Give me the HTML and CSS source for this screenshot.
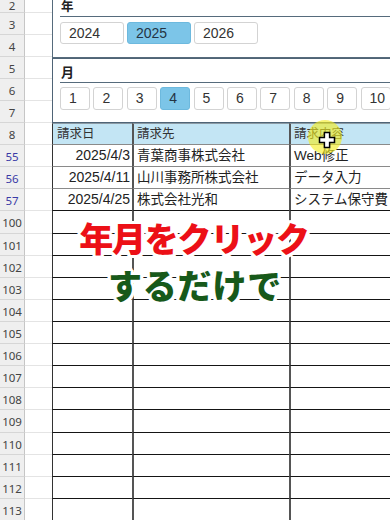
FILE: index.html
```html
<!DOCTYPE html>
<html lang="ja">
<head>
<meta charset="utf-8">
<link rel="stylesheet" href="styles.css">
</head>
<body>
<div class="page">
  <div class="top">
    <div class="heads">
      <div class="row first"><div class="rh">2</div><div class="cb"></div></div>
      <div class="row"><div class="rh">3</div><div class="cb"></div></div>
      <div class="row"><div class="rh">4</div><div class="cb"></div></div>
      <div class="row"><div class="rh">5</div><div class="cb"></div></div>
      <div class="row"><div class="rh">6</div><div class="cb"></div></div>
      <div class="row"><div class="rh">7</div><div class="cb"></div></div>
    </div>
    <div class="slicers">
      <section class="slicer s-year">
        <div class="s-title">年</div>
        <div class="btns">
          <span class="btn yb">2024</span>
          <span class="btn yb on">2025</span>
          <span class="btn yb">2026</span>
        </div>
      </section>
      <section class="slicer s-month">
        <div class="s-title">月</div>
        <div class="btns">
          <span class="btn mb">1</span>
          <span class="btn mb">2</span>
          <span class="btn mb">3</span>
          <span class="btn mb on">4</span>
          <span class="btn mb">5</span>
          <span class="btn mb">6</span>
          <span class="btn mb">7</span>
          <span class="btn mb">8</span>
          <span class="btn mb">9</span>
          <span class="btn mb">10</span>
        </div>
      </section>
    </div>
  </div>

  <div class="table">
    <div class="row hdr"><div class="rh">8</div><div class="cb"></div><div class="c c1">請求日</div><div class="c c2">請求先</div><div class="c c3">請求内容</div></div>
    <div class="row data"><div class="rh f">55</div><div class="cb"></div><div class="c c1 num">2025/4/3</div><div class="c c2">青葉商事株式会社</div><div class="c c3">Web修正</div></div>
    <div class="row data"><div class="rh f">56</div><div class="cb"></div><div class="c c1 num">2025/4/11</div><div class="c c2">山川事務所株式会社</div><div class="c c3">データ入力</div></div>
    <div class="row data last"><div class="rh f">57</div><div class="cb"></div><div class="c c1 num">2025/4/25</div><div class="c c2">株式会社光和</div><div class="c c3">システム保守費</div></div>
    <div class="row empty"><div class="rh">100</div><div class="cb"></div><div class="c c1"></div><div class="c c2"></div><div class="c c3"></div></div>
    <div class="row empty"><div class="rh">101</div><div class="cb"></div><div class="c c1"></div><div class="c c2"></div><div class="c c3"></div></div>
    <div class="row empty"><div class="rh">102</div><div class="cb"></div><div class="c c1"></div><div class="c c2"></div><div class="c c3"></div></div>
    <div class="row empty"><div class="rh">103</div><div class="cb"></div><div class="c c1"></div><div class="c c2"></div><div class="c c3"></div></div>
    <div class="row empty"><div class="rh">104</div><div class="cb"></div><div class="c c1"></div><div class="c c2"></div><div class="c c3"></div></div>
    <div class="row empty"><div class="rh">105</div><div class="cb"></div><div class="c c1"></div><div class="c c2"></div><div class="c c3"></div></div>
    <div class="row empty"><div class="rh">106</div><div class="cb"></div><div class="c c1"></div><div class="c c2"></div><div class="c c3"></div></div>
    <div class="row empty"><div class="rh">107</div><div class="cb"></div><div class="c c1"></div><div class="c c2"></div><div class="c c3"></div></div>
    <div class="row empty"><div class="rh">108</div><div class="cb"></div><div class="c c1"></div><div class="c c2"></div><div class="c c3"></div></div>
    <div class="row empty"><div class="rh">109</div><div class="cb"></div><div class="c c1"></div><div class="c c2"></div><div class="c c3"></div></div>
    <div class="row empty"><div class="rh">110</div><div class="cb"></div><div class="c c1"></div><div class="c c2"></div><div class="c c3"></div></div>
    <div class="row empty"><div class="rh">111</div><div class="cb"></div><div class="c c1"></div><div class="c c2"></div><div class="c c3"></div></div>
    <div class="row empty"><div class="rh">112</div><div class="cb"></div><div class="c c1"></div><div class="c c2"></div><div class="c c3"></div></div>
    <div class="row empty"><div class="rh">113</div><div class="cb"></div><div class="c c1"></div><div class="c c2"></div><div class="c c3"></div></div>
  </div>

  <div class="overlay">
    <div class="ov ov-red">年月をクリック</div>
    <div class="ov ov-green">するだけで</div>
  </div>

  <div class="pointer">
    <svg width="44" height="44" viewBox="-22 -22 44 44">
      <circle cx="-2" cy="-3" r="17" fill="rgba(244,238,30,0.62)"/>
      <path d="M-2.6,-7.5 H2.6 V-2.6 H7.5 V2.6 H2.6 V7.5 H-2.6 V2.6 H-7.5 V-2.6 H-2.6 Z" fill="#fff" stroke="#000" stroke-width="1.5" stroke-linejoin="miter"/>
    </svg>
  </div>
</div>
</body>
</html>
```

FILE: styles.css
```css
html, body {
  margin: 0;
  padding: 0;
  background: #fff;
}
.page {
  position: relative;
  width: 390px;
  height: 520px;
  overflow: hidden;
  background: #fff;
  font-family: "Liberation Sans", "Noto Sans CJK JP", sans-serif;
  color: #333;
}
.top {
  display: flex;
}
.heads {
  width: 52px;
  flex-shrink: 0;
}
.row {
  display: flex;
  height: 22.12px;
}
.row.first {
  height: 12.5px;
}
.rh {
  width: 25px;
  flex-shrink: 0;
  box-sizing: border-box;
  background: #efefef;
  border-right: 1px solid #c6c6c6;
  border-bottom: 1px solid #d6d6d6;
  font-family: "Noto Sans", "Liberation Sans", sans-serif;
  font-size: 11.5px;
  line-height: 23px;
  text-align: center;
  color: #444;
}
.row.first .rh {
  line-height: 12px;
}
.rh.f {
  color: #3a3aa6;
}
.cb {
  width: 27px;
  flex-shrink: 0;
  box-sizing: border-box;
  border-bottom: 1px solid #e4e4e4;
}

/* slicers */
.slicers {
  flex: 1;
  display: flex;
  flex-direction: column;
  min-width: 0;
}
.slicer {
  box-sizing: border-box;
  background: #fff;
  border-left: 1px solid #566b7c;
  padding-left: 7px;
}
.s-year {
  height: 58px;
  border-bottom: 1px solid #566b7c;
}
.s-month {
  height: 65px;
  border-top: 1px solid #4f6476;
  border-bottom: 1px solid #4f6476;
  border-left-color: #4f6476;
}
.s-title {
  font-family: "Noto Sans CJK JP", sans-serif;
  font-weight: 700;
  font-size: 13px;
  line-height: 16px;
  color: #222;
  border-bottom: 1px solid #566b7c;
  padding-left: 1px;
}
.s-year .s-title {
  font-size: 12.5px;
  line-height: 12px;
  padding-top: 0;
  padding-bottom: 3.5px;
}
.s-month .s-title {
  padding-top: 4.5px;
  padding-bottom: 2.5px;
}
.btns {
  display: flex;
  white-space: nowrap;
}
.s-year .btns {
  margin-top: 5.5px;
  gap: 3px;
}
.s-month .btns {
  margin-top: 4px;
  gap: 3.4px;
}
.btn {
  flex-shrink: 0;
  box-sizing: border-box;
  background: #fff;
  border: 1px solid #d3d3d3;
  border-radius: 3px;
  font-family: "Liberation Sans", sans-serif;
  font-size: 14px;
  color: #333;
  padding-left: 8px;
}
.btn.on {
  background: #7cc5e8;
  border-color: #6db9de;
  color: #243444;
}
.yb {
  width: 64px;
  height: 22px;
  line-height: 20px;
}
.mb {
  width: 30px;
  height: 23px;
  line-height: 21px;
}

/* table */
.c {
  box-sizing: border-box;
  height: 100%;
  font-size: 13.5px;
  line-height: 21px;
  white-space: nowrap;
  overflow: hidden;
  color: #222;
}
.c1 {
  width: 80px;
  flex-shrink: 0;
  border-left: 1px solid #333;
  padding-left: 4px;
}
.c2 {
  width: 157px;
  flex-shrink: 0;
  border-left: 2px solid #555;
  padding-left: 3px;
}
.c3 {
  flex: 1;
  min-width: 110px;
  border-left: 2px solid #555;
  padding-left: 3px;
}
.num {
  text-align: right;
  padding-right: 2px;
  font-size: 14px;
}
.hdr .c {
  background: #c3e5f4;
  border-top: 1px solid #8b9aa4;
  border-bottom: 1px solid #8a8a8a;
  font-size: 12.5px;
  line-height: 20px;
  color: #333;
}
.data .c {
  border-bottom: 1px solid #8a8a8a;
}
.data.last .c,
.empty .c {
  border-bottom: 1px solid #151515;
}

/* overlay caption */
.overlay {
  position: absolute;
  left: 0;
  top: 218px;
  width: 390px;
  display: flex;
  flex-direction: column;
  align-items: center;
  pointer-events: none;
}
.ov {
  font-family: "Noto Sans CJK JP", sans-serif;
  font-weight: 900;
  font-size: 34px;
  line-height: 40px;
  white-space: nowrap;
  text-shadow:
    3px 0 0 #fff, -3px 0 0 #fff, 0 3px 0 #fff, 0 -3px 0 #fff,
    2px 2px 0 #fff, -2px 2px 0 #fff, 2px -2px 0 #fff, -2px -2px 0 #fff,
    3px 1.5px 0 #fff, -3px 1.5px 0 #fff, 3px -1.5px 0 #fff, -3px -1.5px 0 #fff,
    1.5px 3px 0 #fff, -1.5px 3px 0 #fff, 1.5px -3px 0 #fff, -1.5px -3px 0 #fff;
}
.ov-red {
  color: #ec1017;
  letter-spacing: -1.2px;
  margin-left: -2px;
}
.ov-green {
  color: #17591a;
  letter-spacing: 0.8px;
  margin-top: 7px;
}

/* mouse pointer */
.pointer {
  position: absolute;
  left: 305px;
  top: 118px;
  width: 44px;
  height: 44px;
  pointer-events: none;
}
.pointer svg {
  display: block;
}
```
